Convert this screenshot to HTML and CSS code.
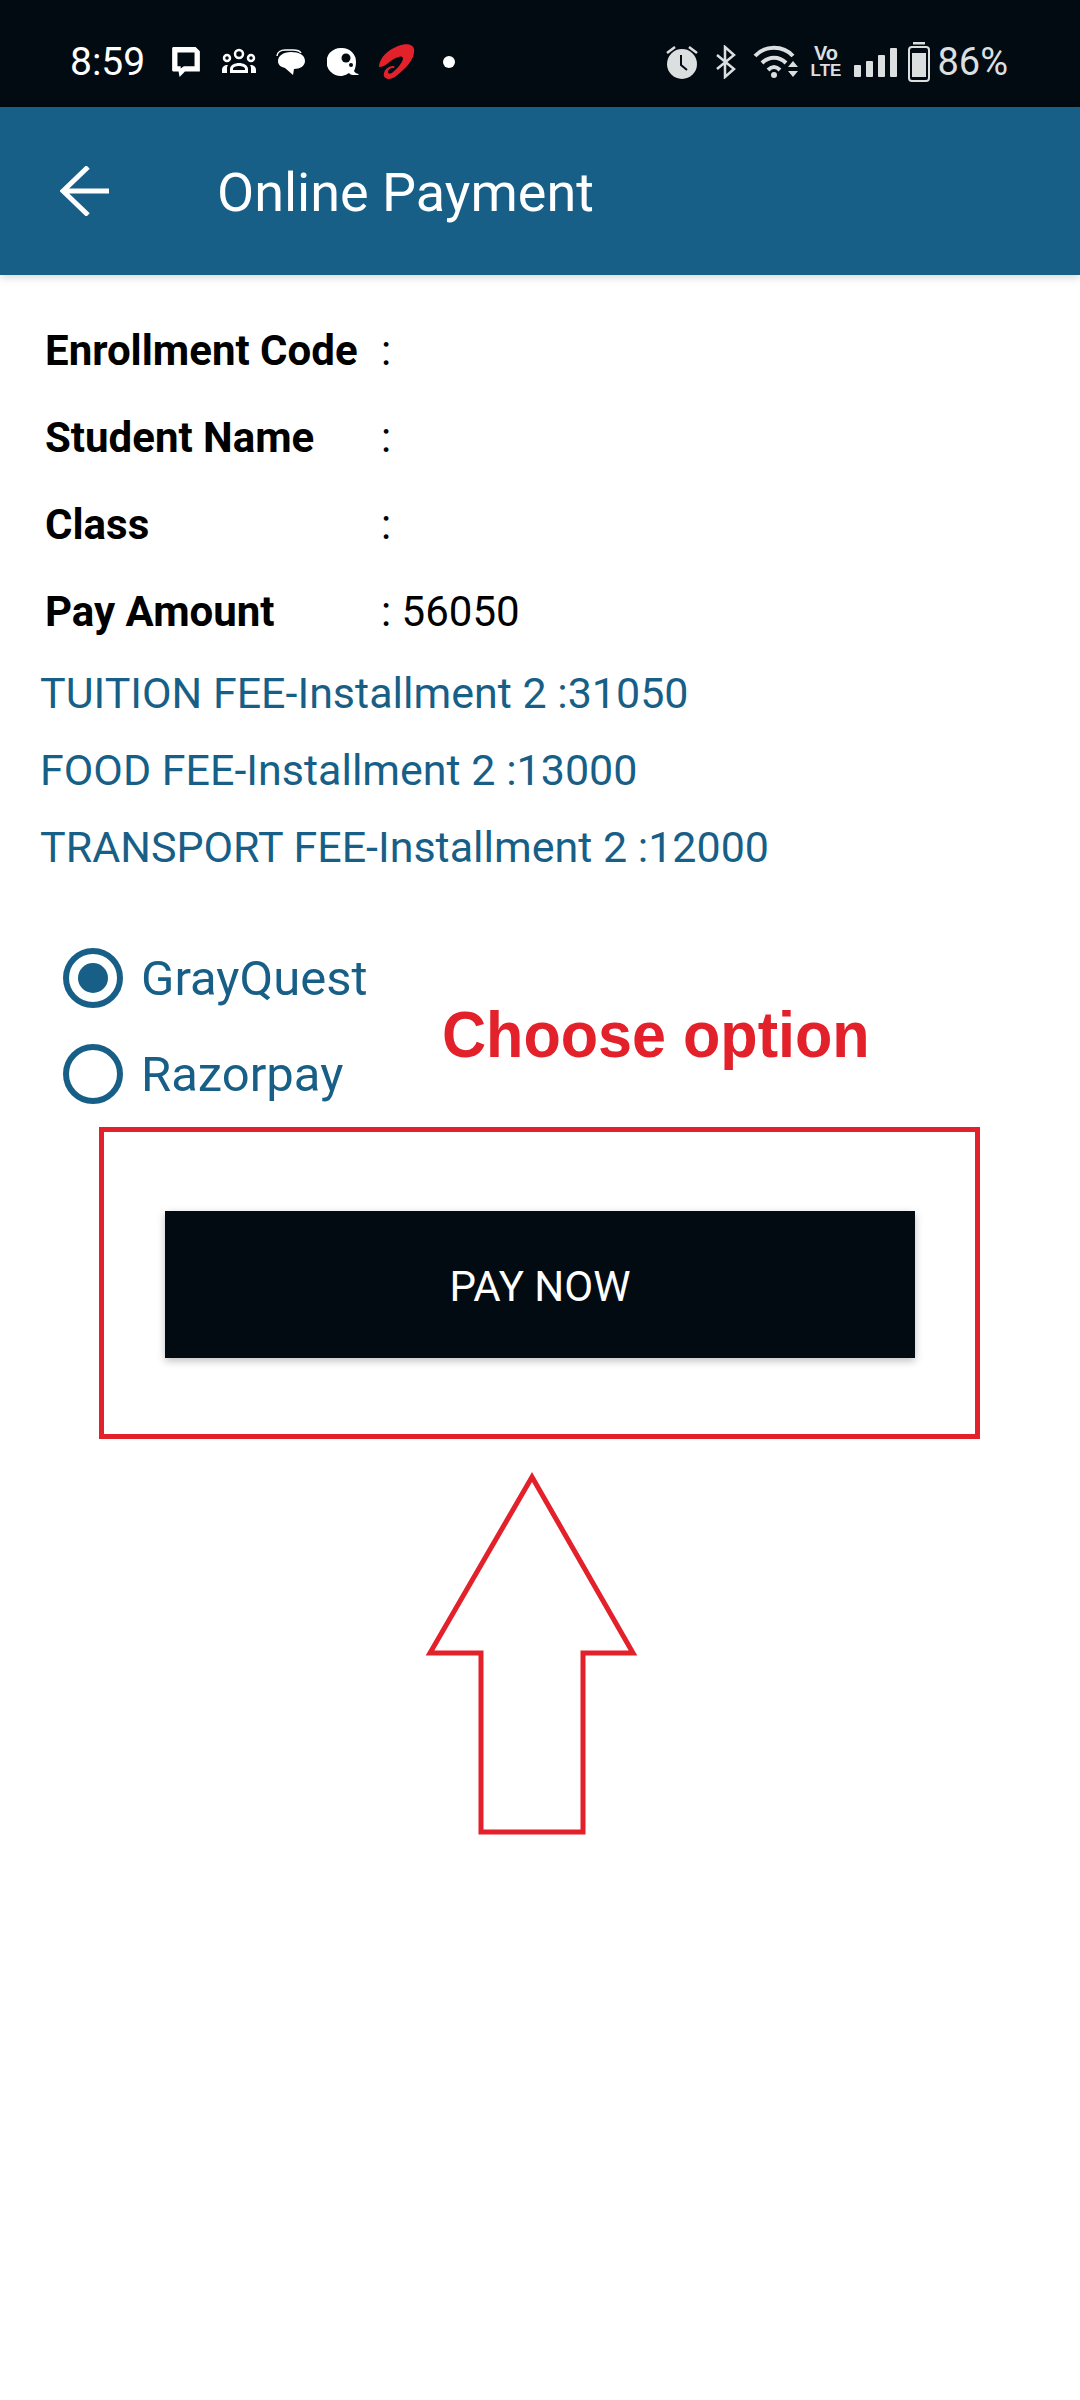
FILE: index.html
```html
<!DOCTYPE html>
<html>
	<head>
		<meta charset="UTF-8">
		<title>Online Payment</title>
		<link rel="stylesheet" href="styles.css">
	</head>
	<body>
		<div class="status-bar">
			<div class="status-left">
				<span class="clock">8:59</span>
				<!-- message -->
				<svg class="ic" width="32" height="32" viewBox="0 0 30 30"><path fill="#fff" fill-rule="evenodd" d="M3 1h21l4 4v19H14l-5 5-1-5H3a1.500 1.500 0 0 1-1-1.500V2.500A1.500 1.500 0 0 1 3 1zm4 5v13h3v2l3-2h10V6z"/></svg>
				<!-- people -->
				<svg class="ic" width="36" height="28" viewBox="0 0 36 28"><g fill="none" stroke="#fff" stroke-width="2.500"><circle cx="18" cy="6" r="4"/><circle cx="6" cy="10" r="3"/><circle cx="30" cy="10" r="3"/></g><path fill="#fff" fill-rule="evenodd" d="M9 25v-4c0-4 5-6 9-6s9 2 9 6v4zm3-3h12v-1c0-2-3-3-6-3s-6 1-6 3zM1 25v-3c0-3 2-5 6-5-1 1-1 3-1 4v4zm34 0v-3c0-3-2-5-6-5 1 1 1 3 1 4v4z"/></svg>
				<!-- chat bubbles -->
				<svg class="ic" width="30" height="30" viewBox="0 0 30 30"><path fill="none" stroke="#fff" stroke-width="1.500" d="M1 9c0-4 4-6 8-6h8c4 0 7 1 8 3"/><path fill="#fff" d="M2 14c0-5 5-9 13-9s14 3 14 9c0 5-5 8-11 8l-1 6-8-7C5 20 2 18 2 14z"/></svg>
				<!-- round bubble with dots -->
				<svg class="ic bubble" width="33" height="30" viewBox="0 0 33 30"><path fill="#fff" d="M15 1a14 14 0 0 1 14 14c0 4-1 7-2 9 1 2 3 3 5 3l-1 1h-5c-2 0-3-1-4-2a14 14 0 1 1-7-25z"/><circle cx="19" cy="11" r="4.500" fill="#020b12"/><circle cx="24" cy="18" r="2" fill="#020b12"/></svg>
				<!-- carrier logo -->
				<svg class="ic" width="36" height="36" viewBox="0 0 36 36"><path fill="#e3212b" d="M0 22C1 13 9 6 19 2c8-3 15-2 16 3 1 6-3 14-11 21-5 5-10 9-14 9-4 0-6-3-5-6 1-4 5-7 9-7 2 0 2 2 0 2-3 0-5 2-5 4s3 2 5 0c5-4 9-9 10-13 0-2-1-3-4-2-5 1-8 4-12 7-4 3-9 4-8 2z"/></svg>
				<span class="dot"></span>
			</div>
			<div class="status-right">
				<!-- alarm -->
				<svg class="ic alarm" width="32" height="34" viewBox="0 0 32 34"><circle cx="16" cy="19" r="15" fill="#dcdfe0"/><path d="M15 10v10l6 5" fill="none" stroke="#020b12" stroke-width="2"/><path d="M1 8l8-6M31 8l-8-6" stroke="#dcdfe0" stroke-width="2.500"/></svg>
				<!-- bluetooth -->
				<svg class="ic bluetooth" width="22" height="34" viewBox="0 0 22 34"><path d="M2 10l17 14-9 8V2l9 8L2 24" fill="none" stroke="#dcdfe0" stroke-width="2.500"/></svg>
				<!-- wifi -->
				<svg class="ic wifi" width="46" height="34" viewBox="0 0 46 34"><g fill="none" stroke="#dcdfe0" stroke-width="4"><path d="M2 11c10-11 28-11 38 0"/><path d="M9 18c7-7 17-7 24 0"/><path d="M15 25c4-4 8-4 12 0"/></g><circle cx="21" cy="30" r="3" fill="#dcdfe0"/><path fill="#dcdfe0" d="M35 22l5-6 5 6zm0 4h10l-5 6z"/></svg>
				<span class="volte"><span class="vo">Vo</span><br>LTE</span>
				<!-- signal -->
				<svg class="ic signal" width="44" height="32" viewBox="0 0 44 32"><g fill="#dcdfe0"><rect x="0" y="19" width="7" height="12" rx="1"/><rect x="12" y="15" width="7" height="16" rx="1"/><rect x="24" y="9" width="7" height="22" rx="1"/><rect x="36" y="2" width="7" height="29" rx="1"/></g></svg>
				<!-- battery -->
				<svg class="ic battery" width="22" height="40" viewBox="0 0 22 40"><rect x="5" y="0" width="12" height="2.500" fill="#dcdfe0"/><rect x="1" y="5" width="20" height="34" rx="3" fill="none" stroke="#dcdfe0" stroke-width="2"/><rect x="4" y="11" width="14" height="24" fill="#dcdfe0"/></svg>
				<span class="percent">86%</span>
			</div>
		</div>

		<div class="app-bar">
			<svg class="back" width="50" height="50" viewBox="0 0 50 50"><path d="M4 25h45M28 1L3 25l25 24" fill="none" stroke="#fff" stroke-width="5"/></svg>
			<span class="title">Online Payment</span>
		</div>

		<div class="content">
			<div class="info">
				<div class="info-row"><b>Enrollment Code</b><span>:</span></div>
				<div class="info-row"><b>Student Name</b><span>:</span></div>
				<div class="info-row"><b>Class</b><span>:</span></div>
				<div class="info-row"><b>Pay Amount</b><span>: 56050</span></div>
			</div>
			<div class="fees">
				<div>TUITION FEE-Installment 2 :31050</div>
				<div>FOOD FEE-Installment 2 :13000</div>
				<div>TRANSPORT FEE-Installment 2 :12000</div>
			</div>
			<div class="options">
				<div class="option"><span class="radio on"></span>GrayQuest</div>
				<div class="option"><span class="radio"></span>Razorpay</div>
			</div>
			<div class="pay-wrap">
				<div class="pay-btn">PAY NOW</div>
			</div>
		</div>

		<!-- red marks drawn on top of the page -->
		<div class="mark-text">Choose option</div>
		<div class="mark-box"></div>
		<svg class="mark-arrow" width="215" height="368" viewBox="0 0 215 368"><path d="M107 7L208 183H158V362H56V183H5z" fill="none" stroke="#e3212b" stroke-width="5"/></svg>
	</body>
</html>
```

FILE: styles.css
```css
*{
	margin: 0px;
	padding: 0px;
	box-sizing: border-box;
}

body{
	width: 1080px;
	height: 2400px;
	background-color: #fff;
	font-family: Roboto, "Liberation Sans", sans-serif;
	position: relative;
	overflow: hidden;
}

/*top status strip*/
.status-bar{
	height: 107px;
	background-color: #020b12;
	display: flex;
	justify-content: space-between;
	align-items: center;
	padding: 16px 72px 0 70px;
}

.status-left{
	display: flex;
	align-items: center;
	gap: 19px;
}

.clock{
	font-size: 39px;
	color: #fff;
	margin-right: 6px;
}

.ic{
	display: block;
}

.bubble{
	margin-left: 2px;
}

.dot{
	width: 12px;
	height: 12px;
	border-radius: 50%;
	background-color: #fff;
	margin-left: 9px;
}

.status-right{
	display: flex;
	align-items: center;
	color: #dcdfe0;
}

.alarm{
	margin-right: 17px;
}

.bluetooth{
	margin-right: 16px;
}

.wifi{
	margin-right: 12px;
}

.volte{
	font-size: 17px;
	line-height: 16px;
	font-weight: 700;
	text-align: center;
	font-family: "Liberation Sans", sans-serif;
	margin-right: 13px;
}

.vo{
	font-size: 20px;
}

.signal{
	margin-right: 10px;
}

.battery{
	margin-right: 7px;
}

.percent{
	font-size: 38px;
}

.app-bar{
	height: 168px;
	background-color: #185f87;
	display: flex;
	align-items: center;
	padding-left: 60px;
	box-shadow: 0 3px 8px rgba(0,0,0,0.15);
}

.back{
	flex-shrink: 0;
}

.title{
	color: #fff;
	font-size: 54px;
	margin-left: 107px;
	padding-top: 3px;
}

.content{
	padding-top: 32px;
}

.info{
	padding-left: 45px;
	font-size: 42px;
	color: #000;
}

.info-row{
	display: flex;
	height: 87px;
	align-items: center;
}

.info-row b{
	width: 336px;
	font-weight: 700;
}

.fees{
	padding-left: 40px;
	font-size: 43px;
	color: #185f87;
	margin-top: -1px;
}

.fees div{
	height: 77px;
	display: flex;
	align-items: center;
}

.options{
	padding-left: 63px;
	margin-top: 45px;
}

.option{
	display: flex;
	align-items: center;
	height: 96px;
	font-size: 49px;
	color: #185f87;
}

.radio{
	width: 60px;
	height: 60px;
	border: 6px solid #185f87;
	border-radius: 50%;
	margin-right: 18px;
	display: flex;
	align-items: center;
	justify-content: center;
}

.radio.on::after{
	content: "";
	width: 30px;
	height: 30px;
	border-radius: 50%;
	background-color: #185f87;
}

.pay-wrap{
	padding: 89px 165px 0;
}

.pay-btn{
	height: 147px;
	background-color: #020b12;
	color: #fff;
	font-size: 42px;
	padding-top: 4px;
	display: flex;
	align-items: center;
	justify-content: center;
	box-shadow: 0 3px 8px rgba(0,0,0,0.25);
}

/*red marks over the page*/
.mark-text{
	position: absolute;
	left: 442px;
	top: 997px;
	font-family: "Liberation Sans", sans-serif;
	font-weight: 700;
	font-size: 65px;
	color: #e3212b;
	white-space: nowrap;
	transform: scaleX(0.94);
	transform-origin: left center;
}

.mark-box{
	position: absolute;
	left: 99px;
	top: 1127px;
	width: 881px;
	height: 312px;
	border: 5px solid #e3212b;
}

.mark-arrow{
	position: absolute;
	left: 425px;
	top: 1470px;
}
```
